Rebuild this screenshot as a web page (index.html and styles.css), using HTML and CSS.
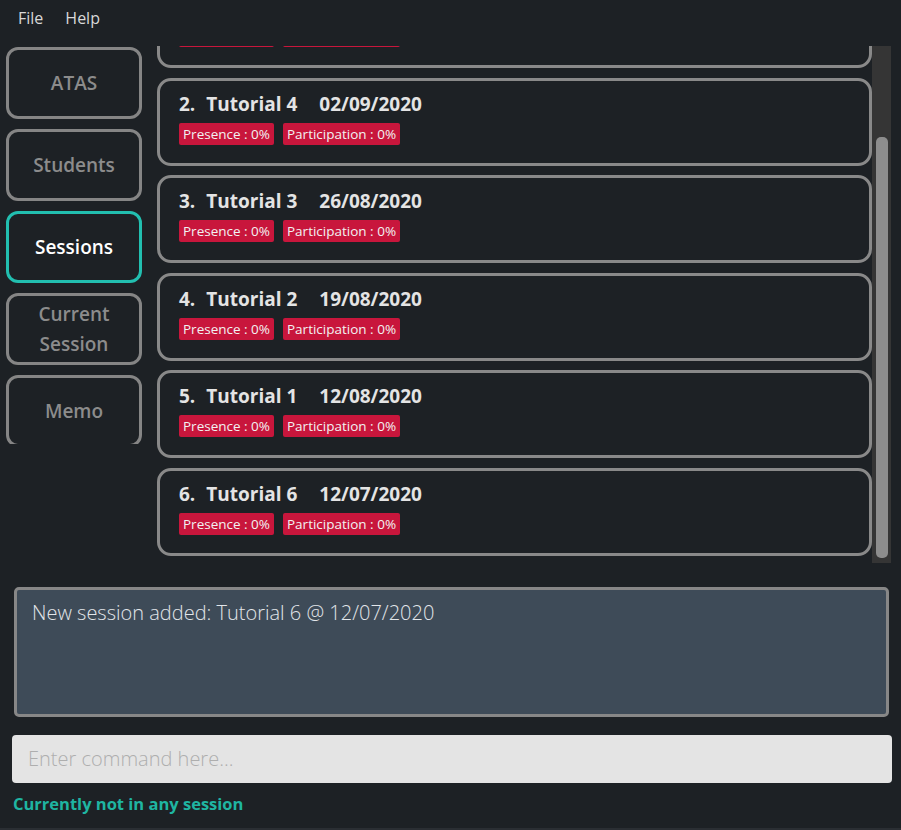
FILE: index.html
```html
<!DOCTYPE html>
<html>
<head>
<meta charset="utf-8">
<title>ATAS</title>
<link rel="stylesheet" href="styles.css">
</head>
<body>
<div class="app">
  <div class="menubar">
    <span class="menu-item">File</span>
    <span class="menu-item">Help</span>
  </div>
  <div class="main">
    <nav class="nav">
      <div class="tab">ATAS</div>
      <div class="tab">Students</div>
      <div class="tab active">Sessions</div>
      <div class="tab">Current<br>Session</div>
      <div class="tab">Memo</div>
    </nav>
    <div class="list-panel">
      <div class="list">
        <div class="card first">
          <div class="title"><span class="idx">1.</span>Tutorial 5<span class="date">09/09/2020</span></div>
          <div class="badges"><span class="badge">Presence : 0%</span><span class="badge">Participation : 0%</span></div>
        </div>
        <div class="card">
          <div class="title"><span class="idx">2.</span>Tutorial 4<span class="date">02/09/2020</span></div>
          <div class="badges"><span class="badge">Presence : 0%</span><span class="badge">Participation : 0%</span></div>
        </div>
        <div class="card">
          <div class="title"><span class="idx">3.</span>Tutorial 3<span class="date">26/08/2020</span></div>
          <div class="badges"><span class="badge">Presence : 0%</span><span class="badge">Participation : 0%</span></div>
        </div>
        <div class="card">
          <div class="title"><span class="idx">4.</span>Tutorial 2<span class="date">19/08/2020</span></div>
          <div class="badges"><span class="badge">Presence : 0%</span><span class="badge">Participation : 0%</span></div>
        </div>
        <div class="card">
          <div class="title"><span class="idx">5.</span>Tutorial 1<span class="date">12/08/2020</span></div>
          <div class="badges"><span class="badge">Presence : 0%</span><span class="badge">Participation : 0%</span></div>
        </div>
        <div class="card">
          <div class="title"><span class="idx">6.</span>Tutorial 6<span class="date">12/07/2020</span></div>
          <div class="badges"><span class="badge">Presence : 0%</span><span class="badge">Participation : 0%</span></div>
        </div>
      </div>
      <div class="scrollbar"><div class="thumb"></div></div>
    </div>
  </div>
  <div class="result">New session added: Tutorial 6 @ 12/07/2020</div>
  <div class="command">Enter command here...</div>
  <div class="status">Currently not in any session</div>
</div>
</body>
</html>
```
FILE: styles.css
```css
* { box-sizing: border-box; }
html, body { margin: 0; padding: 0; }
body {
  background: #1d2125;
  font-family: "Open Sans", "Noto Sans", sans-serif;
  width: 901px;
  height: 830px;
  overflow: hidden;
}
.app {
  width: 901px;
  height: 830px;
  display: flex;
  flex-direction: column;
  border-bottom: 2px solid #2a2e33;
}
.menubar {
  flex: none;
  height: 36px;
  display: flex;
  align-items: center;
  padding-left: 18px;
  gap: 22px;
}
.menu-item {
  color: #d8d8d8;
  font-size: 16px;
}
.main {
  flex: none;
  display: flex;
  height: 527px;
  padding-top: 10px;
}
.nav {
  width: 157px;
  padding-top: 1px;
  padding-left: 6px;
  padding-right: 15px;
  height: 398px;
  overflow: hidden;
  display: flex;
  flex-direction: column;
  gap: 10px;
}
.tab {
  flex: none;
  height: 72px;
  border: 3px solid #858585;
  border-radius: 12px;
  display: flex;
  align-items: center;
  justify-content: center;
  text-align: center;
  color: #8c8c8c;
  font-size: 19px;
  font-weight: 600;
  line-height: 30px;
}
.tab.active {
  border-color: #22bfb0;
  color: #ffffff;
}
.list-panel {
  display: flex;
  width: 734px;
  height: 517px;
}
.list {
  width: 715px;
  height: 517px;
  overflow: hidden;
}
.card {
  height: 88px;
  margin-bottom: 9.5px;
  border: 3px solid #898989;
  border-radius: 14px;
  padding: 10px 19px 0;
}
.card.first { margin-top: -66px; }
.title {
  color: #e4e4e4;
  font-size: 19px;
  font-weight: 700;
  line-height: 26px;
  white-space: nowrap;
}
.idx { margin-right: 11px; }
.date { margin-left: 22px; }
.badges {
  display: flex;
  gap: 9px;
  margin-top: 6px;
}
.badge {
  background: #c8163c;
  color: #f2f2f2;
  font-size: 13.5px;
  line-height: 22px;
  height: 22px;
  padding: 0 4px;
  border-radius: 2px;
}
.scrollbar {
  width: 19px;
  height: 517px;
  background: #353535;
  padding: 91px 3px 5px 4px;
}
.thumb {
  width: 12px;
  height: 421px;
  background: #8d8d8d;
  border-radius: 5px;
}
.result {
  flex: none;
  margin: 24px 12px 0 14px;
  height: 130px;
  background: #3e4b58;
  border: 3px solid #878787;
  border-radius: 5px;
  color: #e2e6ea;
  font-size: 20px;
  font-weight: 300;
  padding: 9px 15px;
  line-height: 28px;
}
.command {
  flex: none;
  margin: 18px 9px 0 12px;
  height: 48px;
  background: #e4e4e4;
  border-radius: 4px;
  color: #aeaeae;
  font-size: 20px;
  font-weight: 300;
  line-height: 48px;
  padding-left: 16px;
}
.status {
  flex: none;
  margin: 9px 0 0 13px;
  color: #1fb5a2;
  font-size: 16.5px;
  font-weight: 700;
  line-height: 24px;
}
```
